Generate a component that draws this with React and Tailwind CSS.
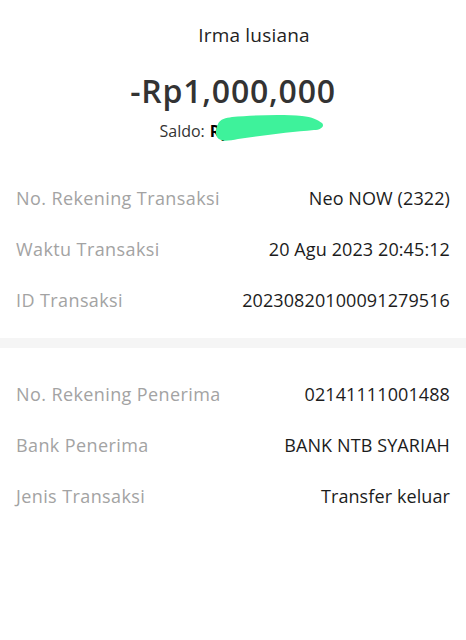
import React from 'react';

const topRows = [
  ['No. Rekening Transaksi', 'Neo NOW (2322)'],
  ['Waktu Transaksi', '20 Agu 2023 20:45:12'],
  ['ID Transaksi', '20230820100091279516'],
];

const bottomRows = [
  ['No. Rekening Penerima', '02141111001488'],
  ['Bank Penerima', 'BANK NTB SYARIAH'],
  ['Jenis Transaksi', 'Transfer keluar'],
];

function Row({ label, value }) {
  return (
    <div className="flex items-center justify-between h-[51px] px-4">
      <span className="text-[18px] tracking-[0.4px] text-[#a3a3a3]">{label}</span>
      <span className="text-[18px] tracking-[0.1px] text-[#1c1c1c]">{value}</span>
    </div>
  );
}

export default function App() {
  return (
    <div
      className="w-[466px] h-[640px] bg-white overflow-hidden"
      style={{ fontFamily: '"Open Sans", "Noto Sans", sans-serif' }}
    >
      <div className="flex flex-col items-center pt-[21px]">
        <div className="pl-[42px] text-[19px] text-[#222] leading-[28px] tracking-[0.2px]">Irma lusiana</div>
        <div className="mt-[22px] text-[32px] font-semibold text-[#333] leading-[40px] tracking-[0.8px]">
          -Rp1,000,000
        </div>
        <div className="relative mt-[9px] flex items-center pl-[14px] text-[16px] leading-[22px] text-[#333]">
          <span>Saldo:</span>
          <span className="ml-[5px] font-bold text-black">Rp</span>
          <span className="w-[90px]" />
          <svg
            className="absolute left-[69px] top-[-8px]"
            width="112"
            height="32"
            viewBox="0 0 112 32"
          >
            <path
              d="M4 12 C6 7 12 6 18 5 C40 3 70 2 88 4 C98 5 104 8 108 11 C111 14 107 18 100 18 C78 20 50 23 24 27 C14 29 6 30 3 25 C1 21 2 16 4 12 Z"
              fill="#3ef29b"
            />
          </svg>
        </div>
      </div>

      <div className="mt-[31px]">
        {topRows.map(([l, v]) => (
          <Row key={l} label={l} value={v} />
        ))}
      </div>

      <div className="mt-[12px] h-[10px] bg-[#f5f5f5]" />

      <div className="mt-[21px]">
        {bottomRows.map(([l, v]) => (
          <Row key={l} label={l} value={v} />
        ))}
      </div>
    </div>
  );
}
